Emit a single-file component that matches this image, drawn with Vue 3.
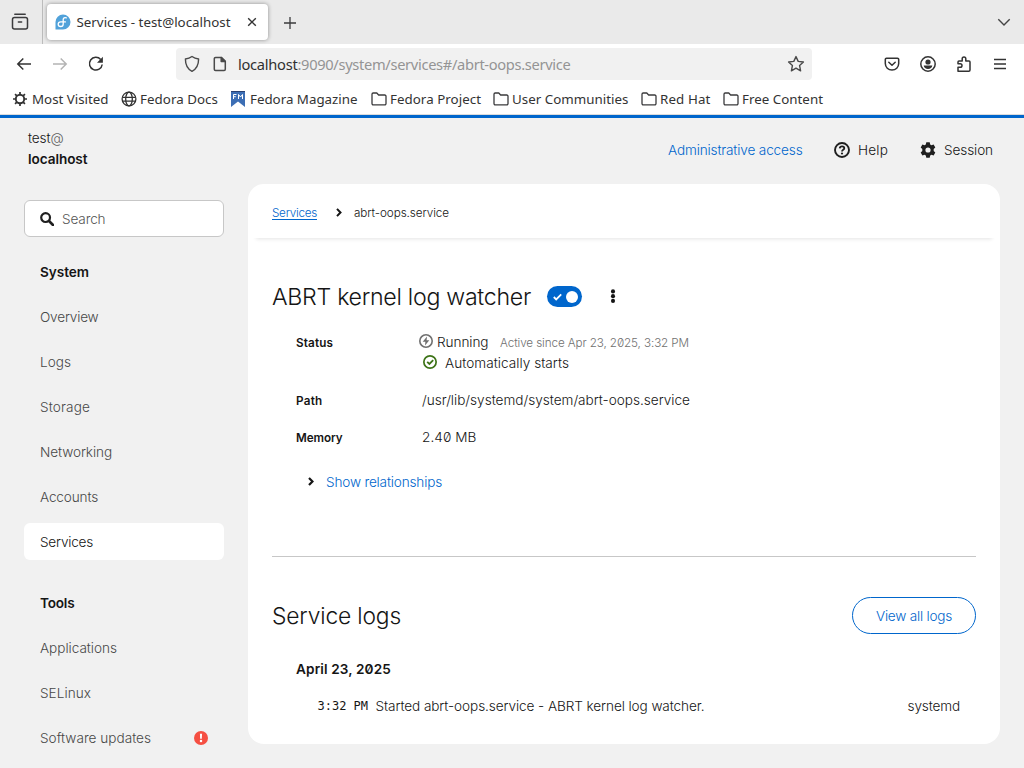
<script setup>
// Spreads a label over a fixed measure by adjusting its tracking.
const vFit = {
  mounted(el, { value }) {
    const natural = el.getBoundingClientRect().width
    el.style.letterSpacing = (value - natural) / el.textContent.length + 'px'
  },
}

const folders = [
  { label: 'Fedora Project', w: 91, cell: 122 },
  { label: 'User Communities', w: 116.5, cell: 148 },
  { label: 'Red Hat', w: 50.5, cell: 82 },
  { label: 'Free Content', w: 81, cell: 110 },
]
const systemNav = [
  { label: 'Overview', w: 58.5 },
  { label: 'Logs', w: 31 },
  { label: 'Storage', w: 50 },
  { label: 'Networking', w: 72 },
  { label: 'Accounts', w: 58 },
  { label: 'Services', w: 53, active: true },
]
const toolsNav = [
  { label: 'Applications', w: 77 },
  { label: 'SELinux', w: 51 },
  { label: 'Software updates', w: 111, alert: true },
]
</script>

<template>
  <div class="window">
    <div class="tabs">
      <div class="history">
        <svg width="18" height="18" viewBox="0 0 18 18" fill="none" stroke="#3b3b3d" stroke-width="1.5" stroke-linecap="round"><path d="M3.8 1.3h10.4" /><rect x="1.5" y="4.5" width="15" height="11.5" rx="2" /><path d="M7.4 9h3.2" /></svg>
      </div>
      <div class="tab">
        <svg class="favicon" width="16" height="16" viewBox="0 0 16 16"><path d="M8 .5A7.5 7.5 0 1 1 8 15.500H.5V8A7.500 7.500 0 0 1 8 .5z" fill="#51a2da" /><path d="M11.300 3.900C9.600 3.100 8.200 4 8.200 5.600v4.300c0 1.600-1.100 2.600-2.500 2.600-1.500 0-2.500-1-2.500-2.300 0-1.400 1-2.300 2.500-2.300h4.700" fill="none" stroke="#fff" stroke-width="1.300" stroke-linecap="round" /></svg>
        <span class="tab-title" v-fit="154">Services - test@localhost</span>
        <svg class="close" width="10" height="10" viewBox="0 0 10 10" stroke="#333" stroke-width="1.400"><path d="M1.200 1.200l7.600 7.600M8.800 1.200L1.200 8.800" /></svg>
      </div>
      <svg class="plus" width="14" height="14" viewBox="0 0 14 14" stroke="#3b3b3d" stroke-width="1.300"><path d="M7 1v12M1 7h12" /></svg>
      <svg class="all-tabs" width="14" height="9" viewBox="0 0 14 9" fill="none" stroke="#444" stroke-width="1.400"><path d="M1.300 1.300L7 7l5.700-5.700" /></svg>
    </div>

    <div class="toolbar">
      <svg width="16" height="16" viewBox="0 0 16 16" fill="none" stroke="#333" stroke-width="1.500"><path d="M15 8H1.800M7.300 2.500L1.800 8l5.500 5.500" /></svg>
      <svg width="16" height="16" viewBox="0 0 16 16" fill="none" stroke="#b4b4b4" stroke-width="1.500"><path d="M1 8h13.200M8.700 2.500L14.200 8l-5.500 5.500" /></svg>
      <svg width="16" height="16" viewBox="0 0 16 16" fill="none" stroke="#333" stroke-width="1.500"><path d="M14.200 8.500A6.400 6.400 0 1 1 12.700 3.500" /><path d="M14.900.8v6H9z" fill="#333" stroke="none" /></svg>
      <div class="urlbar">
        <svg class="shield" width="16" height="18" viewBox="0 0 16 18" fill="none" stroke="#4a4a4a" stroke-width="1.400" stroke-linejoin="round"><path d="M8 1.500c2 1.500 4 2.200 6.600 2.500 0 5.500-1.600 9.800-6.600 12.300C3 13.800 1.400 9.500 1.400 4 4 3.700 6 3 8 1.500z" /></svg>
        <svg class="page-icon" width="14" height="16" viewBox="0 0 14 16" fill="none" stroke="#4a4a4a" stroke-width="1.500" stroke-linejoin="round"><path d="M2.500 1.500h6l3.800 3.800v8a1.200 1.200 0 0 1-1.200 1.200H2.500a1.200 1.200 0 0 1-1.200-1.200V2.700a1.200 1.200 0 0 1 1.200-1.200z" /><path d="M8.200 1.500v4.100h4.100z" fill="#4a4a4a" /></svg>
        <span class="host" v-fit="59.5">localhost</span><span class="rest" v-fit="273">:9090/system/services#/abrt-oops.service</span>
        <svg class="star" width="18" height="18" viewBox="0 0 18 18" fill="none" stroke="#4a4a4a" stroke-width="1.400" stroke-linejoin="round"><path d="M9 1.600l2.200 4.800 5.200.6-3.800 3.600 1 5.200L9 13.200l-4.600 2.600 1-5.200L1.600 7l5.200-.6z" /></svg>
      </div>
      <div class="actions">
        <svg width="16" height="16" viewBox="0 0 16 16" fill="none" stroke="#333" stroke-width="1.500" stroke-linecap="round" stroke-linejoin="round"><path d="M2.500 2.200h11a1.200 1.200 0 0 1 1.200 1.200v4.200a6.700 6.500 0 0 1-13.400 0V3.400a1.200 1.200 0 0 1 1.200-1.200z" /><path d="M4.800 6.300L8 9.300l3.200-3" /></svg>
        <svg width="16" height="16" viewBox="0 0 16 16"><circle cx="8" cy="8" r="7.200" fill="none" stroke="#333" stroke-width="1.500" /><circle cx="8" cy="6" r="2.600" fill="#333" /><path d="M3.700 9.600h8.600c-.2 2-2 3.500-4.300 3.500s-4.100-1.500-4.300-3.500z" fill="#333" /></svg>
        <svg width="16" height="16" viewBox="0 0 16 16" fill="none" stroke="#333" stroke-width="1.500" stroke-linejoin="round"><path d="M2 15.200h10.800a1.200 1.200 0 0 0 1.200-1.200V6a1 1 0 0 0-1-1H9.800V2.700a1.800 1.800 0 0 0-3.600 0V5H3a1 1 0 0 0-1 1v1.700h2.200a1.800 1.800 0 0 1 0 3.600H2z" /></svg>
        <svg width="16" height="16" viewBox="0 0 16 16" stroke="#333" stroke-width="1.400"><path d="M2 3.500h12M2 8h12M2 12.500h12" /></svg>
      </div>
    </div>

    <div class="bookmarks">
      <div class="bm most">
        <svg width="14" height="14" viewBox="0 0 14 14" fill="none" stroke="#333"><circle cx="7" cy="7" r="4.200" stroke-width="1.900" /><path d="M7 0v3M7 11v3M0 7h3M11 7h3M2.050 2.050l2.100 2.100M9.850 9.850l2.100 2.100M2.050 11.950l2.100-2.100M9.850 4.150l2.100-2.100" stroke-width="1.700" /></svg>
        <span v-fit="76.5">Most Visited</span>
      </div>
      <div class="bm docs">
        <svg width="16" height="16" viewBox="0 0 16 16" fill="none" stroke="#333" stroke-width="1.300"><circle cx="8" cy="8" r="6.900" /><ellipse cx="8" cy="8" rx="3.300" ry="6.900" /><path d="M1.300 6.300h13.400M1.300 10.200h13.400" /></svg>
        <span v-fit="78">Fedora Docs</span>
      </div>
      <div class="bm magazine">
        <svg width="14" height="16" viewBox="0 0 14 16"><path d="M0 0h14v16L7 10.500 0 16z" fill="#3c6eb4" /><path d="M0 0h14v1H0z" fill="#294172" /><path d="M2.500 8V3.500h3M2.500 5.700h2.300M7.500 8V3.500l2 2.500 2-2.500V8" fill="none" stroke="#fff" /></svg>
        <span v-fit="107.5">Fedora Magazine</span>
      </div>
      <div v-for="f in folders" :key="f.label" class="bm" :style="{ width: f.cell + 'px' }">
        <svg width="16" height="14" viewBox="0 0 16 14" fill="none" stroke="#3b3b3d" stroke-width="1.300" stroke-linejoin="round"><path d="M2.200 1h3.600l1.800 2h6.200a1.200 1.200 0 0 1 1.200 1.200v7.400a1.200 1.200 0 0 1-1.200 1.200H2.200A1.200 1.200 0 0 1 1 11.600V2.200A1.200 1.200 0 0 1 2.200 1z" /></svg>
        <span v-fit="f.w">{{ f.label }}</span>
      </div>
    </div>

    <div class="app">
      <aside>
        <div class="identity">
          <div><span v-fit="35.500">test<i>@</i></span></div>
          <div><b v-fit="59.500">localhost</b></div>
        </div>
        <div class="search">
          <svg width="14" height="14" viewBox="0 0 14 14" fill="none" stroke="#1f1f1f"><circle cx="5.600" cy="5.600" r="4.400" stroke-width="2.200" /><path d="M9 9l4 4" stroke-width="2.600" stroke-linecap="round" /></svg>
          <span v-fit="43.500">Search</span>
        </div>
        <nav>
          <h2 class="first"><span v-fit="49">System</span></h2>
          <a v-for="n in systemNav" :key="n.label" :class="{ active: n.active }"><span v-fit="n.w">{{ n.label }}</span></a>
          <h2 class="second"><span v-fit="34.500">Tools</span></h2>
          <a v-for="n in toolsNav" :key="n.label"><span v-fit="n.w">{{ n.label }}</span>
            <svg v-if="n.alert" width="14" height="14" viewBox="0 0 14 14"><circle cx="7" cy="7" r="7" fill="#f54f42" /><path d="M5.900 2.800h2.200l-.3 5H6.200z" fill="#fff" /><circle cx="7" cy="10" r="1.250" fill="#fff" /></svg>
          </a>
        </nav>
      </aside>

      <div class="content">
        <header>
          <a class="admin"><span v-fit="134.500">Administrative access</span></a>
          <div class="help">
            <svg width="16" height="16" viewBox="0 0 16 16" fill="none" stroke="#1f1f1f"><circle cx="8" cy="8" r="7" stroke-width="1.900" /><path d="M5.700 6.300C5.900 4.800 6.900 4.300 8 4.300c1.300 0 2.300.8 2.300 1.900C10.300 7.800 8 7.700 8 9.500" stroke-width="1.800" /><circle cx="8" cy="11.500" r="1.100" fill="#1f1f1f" stroke="none" /></svg>
            <span v-fit="30">Help</span>
          </div>
          <div class="session">
            <svg width="16" height="16" viewBox="0 0 16 16"><path fill="#1f1f1f" fill-rule="evenodd" d="M6.300.3h3.400l.5 2.300 1.200.7 2.200-.7 1.700 2.900L13.700 7v2l1.600 1.500-1.700 2.900-2.200-.7-1.200.7-.5 2.300H6.300l-.5-2.300-1.200-.7-2.200.7-1.700-2.900L2.300 9V7L.7 5.500l1.700-2.900 2.200.7 1.200-.7zM8 5.400a2.600 2.600 0 1 0 0 5.200 2.600 2.600 0 0 0 0-5.200z" /></svg>
            <span v-fit="49">Session</span>
          </div>
        </header>

        <main>
          <div class="crumbs">
            <a><span v-fit="45">Services</span></a>
            <svg width="6" height="9" viewBox="0 0 6 9" fill="none" stroke="#151515" stroke-width="2"><path d="M1 .9l3.500 3.600L1 8.100" /></svg>
            <span v-fit="95">abrt-oops.service</span>
          </div>

          <div class="title">
            <h1><span v-fit="259">ABRT kernel log watcher</span></h1>
            <div class="toggle">
              <svg width="9" height="8" viewBox="0 0 9 8" fill="none" stroke="#fff" stroke-width="1.800"><path d="M.8 4l2.400 2.400L8.200 1.400" /></svg>
              <div class="knob"></div>
            </div>
            <svg class="kebab" width="6" height="16" viewBox="0 0 6 16" fill="#151515"><circle cx="3" cy="3.400" r="2.050" /><circle cx="3" cy="8.150" r="2.050" /><circle cx="3" cy="12.900" r="2.050" /></svg>
          </div>

          <dl>
            <dt><span v-fit="37">Status</span></dt>
            <dd class="status">
              <div class="running">
                <svg width="14" height="14" viewBox="0 0 14 14"><circle cx="7" cy="7" r="6.200" fill="none" stroke="#707070" stroke-width="1.600" /><path d="M8 2.600L3.700 7.800h2.700L6 11.400l4.300-5.200H7.600z" fill="#707070" /></svg>
                <span class="run-text" v-fit="51.500">Running</span>
                <span class="since" v-fit="189">Active since Apr 23, 2025, 3:32 PM</span>
              </div>
              <div class="auto">
                <svg width="14" height="14" viewBox="0 0 14 14" fill="none" stroke="#3d7317"><circle cx="7" cy="7" r="6.150" stroke-width="1.700" /><path d="M4.200 6.800l2.200 2.200 3.800-3.800" stroke-width="1.800" /></svg>
                <span v-fit="124">Automatically starts</span>
              </div>
            </dd>
            <dt><span v-fit="26.500">Path</span></dt>
            <dd><span v-fit="268">/usr/lib/systemd/system/abrt-oops.service</span></dd>
            <dt><span v-fit="46.500">Memory</span></dt>
            <dd><span v-fit="54.500">2.40 MB</span></dd>
          </dl>

          <div class="expand">
            <svg width="6" height="9" viewBox="0 0 6 9" fill="none" stroke="#151515" stroke-width="2.200"><path d="M1 .9l3.500 3.600L1 8.100" /></svg>
            <span v-fit="116">Show relationships</span>
          </div>

          <div class="rule"></div>

          <div class="logs-head">
            <h2><span v-fit="129">Service logs</span></h2>
            <button><span v-fit="76">View all logs</span></button>
          </div>
          <div class="date"><span v-fit="95">April 23, 2025</span></div>
          <div class="log">
            <span class="time">3:32 PM</span>
            <span class="message" v-fit="329">Started abrt-oops.service - ABRT kernel log watcher.</span>
            <span class="source" v-fit="52.500">systemd</span>
          </div>
        </main>
      </div>
    </div>
  </div>
</template>

<style>
body {
  background: #f1f1f1;
  overflow: hidden;
}
</style>

<style scoped>
* {
  box-sizing: border-box;
}
svg {
  display: block;
  flex: none;
}
span,
b {
  white-space: nowrap;
}
.window {
  width: 1024px;
  height: 768px;
  overflow: hidden;
  font-family: "Noto Sans", sans-serif;
  font-size: 13.33px;
  color: #333;
}
.tabs {
  display: flex;
  align-items: center;
  height: 44px;
  background: #eaeaea;
}
.history {
  display: flex;
  align-items: center;
  width: 43px;
  height: 44px;
  padding-left: 11px;
  border-right: 1px solid #bcbcbc;
}
.tab {
  display: flex;
  align-items: center;
  width: 221px;
  height: 36px;
  margin-left: 4px;
  padding-left: 8px;
  background: #fff;
  border-radius: 4px;
  box-shadow: 0 0 4px rgba(0, 0, 0, 0.4);
}
.favicon {
  margin-right: 5.5px;
}
.tab-title,
.host,
.rest {
  flex: none;
}
.close {
  margin-left: 16.5px;
}
.plus {
  margin-left: 14.5px;
  margin-top: 1px;
}
.all-tabs {
  margin-left: auto;
  margin-right: 13px;
}
.toolbar {
  display: flex;
  align-items: center;
  gap: 20px;
  height: 40px;
  padding-left: 16px;
  background: #fff;
}
.urlbar {
  display: flex;
  align-items: center;
  width: 636px;
  height: 32px;
  margin-left: 52px;
  padding-left: 8px;
  background: #f1f1f1;
  border-radius: 4px;
  font-size: 14.67px;
}
.page-icon {
  margin: 0 11px 0 13px;
}
.host {
  color: #303030;
}
.rest {
  color: #949494;
}
.star {
  margin-left: auto;
  margin-right: 7px;
}
.actions {
  display: flex;
  gap: 20px;
  margin-left: 52px;
}
.bookmarks {
  display: flex;
  align-items: center;
  height: 34px;
  padding: 0 0 1px 13px;
  background: #fff;
  border-bottom: 3px solid #06c;
  box-shadow: inset 0 -1px #dcdcdc;
}
.bm {
  display: flex;
  align-items: center;
  gap: 3px;
}
.bm svg {
  margin-top: -1px;
}
.most {
  width: 108px;
  gap: 5px;
}
.docs {
  width: 110px;
}
.magazine {
  width: 140px;
  gap: 5px;
}
.app {
  display: flex;
  height: 650px;
  background: #f1f1f1;
  font-family: Inter, sans-serif;
  font-size: 13.6px;
  font-weight: 300;
  font-feature-settings: "zero";
  color: #151515;
}
aside {
  width: 248px;
  padding: 10px 24px 0;
}
.identity {
  height: 72px;
  padding-left: 4px;
  line-height: 21px;
}
.identity i {
  font-style: normal;
  color: #606060;
}
.identity b {
  font-weight: 600;
}
.search {
  display: flex;
  align-items: center;
  gap: 8px;
  height: 37px;
  padding: 0 15px;
  background: #fff;
  border: 1px solid #c7c7c7;
  border-radius: 6px;
  color: #555;
}
nav {
  display: flex;
  flex-direction: column;
}
nav h2 {
  margin: 0 0 0 16px;
  font-size: 13.6px;
  font-weight: 600;
  line-height: 20px;
  color: #151515;
}
nav .first {
  margin-top: 25px;
  margin-bottom: 16px;
}
nav .second {
  margin-top: 25px;
  margin-bottom: 16px;
}
nav a {
  display: flex;
  align-items: center;
  justify-content: space-between;
  height: 37px;
  margin-bottom: 8px;
  padding: 0 16px;
  border-radius: 6px;
  color: #484848;
}
nav a.active {
  background: #fff;
  color: #151515;
}
.content {
  width: 752px;
}
header {
  display: flex;
  align-items: center;
  height: 66px;
  padding: 0 0 2px 420px;
}
header svg {
  margin-top: -1px;
}
.admin {
  width: 166px;
  color: #06c;
}
.help,
.session {
  display: flex;
  align-items: center;
  gap: 8px;
}
.help {
  width: 86px;
}
main {
  height: 560px;
  background: #fff;
  border-radius: 16px;
}
.crumbs {
  display: flex;
  align-items: center;
  height: 54px;
  margin: 0 4px;
  padding: 4px 20px 0;
  font-size: 11.7px;
  box-shadow: 0 5px 4px -4px rgba(0, 0, 0, 0.11);
}
.crumbs a {
  height: 14px;
  line-height: 14px;
  color: #06c;
  border-bottom: 1px solid #06c;
}
.crumbs svg {
  margin: -1px 12px 0 19px;
}
.title {
  display: flex;
  align-items: center;
  height: 38px;
  margin-top: 40px;
  padding-left: 24px;
}
h1 {
  width: 275px;
  margin: 0;
  font-size: 23.2px;
  font-weight: 300;
}
.toggle {
  display: flex;
  align-items: center;
  justify-content: space-between;
  width: 35px;
  height: 21px;
  margin-top: -1px;
  padding: 0 4px 0 6px;
  background: #06c;
  border-radius: 11px;
}
.knob {
  width: 12px;
  height: 12px;
  background: #fff;
  border-radius: 50%;
}
.kebab {
  margin-left: 28px;
  margin-top: -2px;
}
dl {
  display: grid;
  grid-template-columns: 126px 1fr;
  grid-template-rows: 41px 20px 20px;
  row-gap: 17px;
  margin: 16px 0 0;
  padding-left: 48px;
  line-height: 20px;
}
dt {
  padding-top: 1px;
  font-size: 11.7px;
  font-weight: 600;
}
dd {
  margin: 0;
}
.running {
  display: flex;
  height: 21px;
  margin-left: -3px;
}
.running svg {
  margin-top: 2px;
}
.run-text {
  margin-left: 4px;
}
.since {
  margin: 1px 0 0 11.5px;
  font-size: 11.7px;
  color: #6f6f6f;
}
.auto {
  display: flex;
  align-items: center;
  height: 20px;
  gap: 8px;
  padding-left: 1px;
}
.auto svg {
  margin-top: -2px;
}
.expand {
  display: flex;
  align-items: center;
  gap: 12px;
  height: 20px;
  margin-top: 25px;
  padding-left: 60px;
  color: #06c;
}
.expand svg {
  margin-top: -2px;
}
.rule {
  height: 1px;
  margin: 64px 24px 0;
  background: #c7c7c7;
}
.logs-head {
  display: flex;
  align-items: center;
  justify-content: space-between;
  height: 37px;
  margin: 40px 24px 0;
}
.logs-head h2 {
  margin: 0;
  font-size: 22.8px;
  font-weight: 300;
}
button {
  width: 124px;
  height: 37px;
  padding: 1px 0 0;
  border: 1px solid #06c;
  border-radius: 19px;
  background: #fff;
  color: #06c;
  font: inherit;
}
.date {
  margin: 25px 0 0 48px;
  line-height: 20px;
  font-weight: 600;
}
.log {
  display: flex;
  align-items: center;
  height: 20px;
  margin-top: 17px;
  padding: 0 40px 0 69.5px;
}
.time {
  width: 58px;
  font-family: "DejaVu Sans Mono", monospace;
  font-size: 12px;
}
.source {
  margin-left: auto;
}
</style>
